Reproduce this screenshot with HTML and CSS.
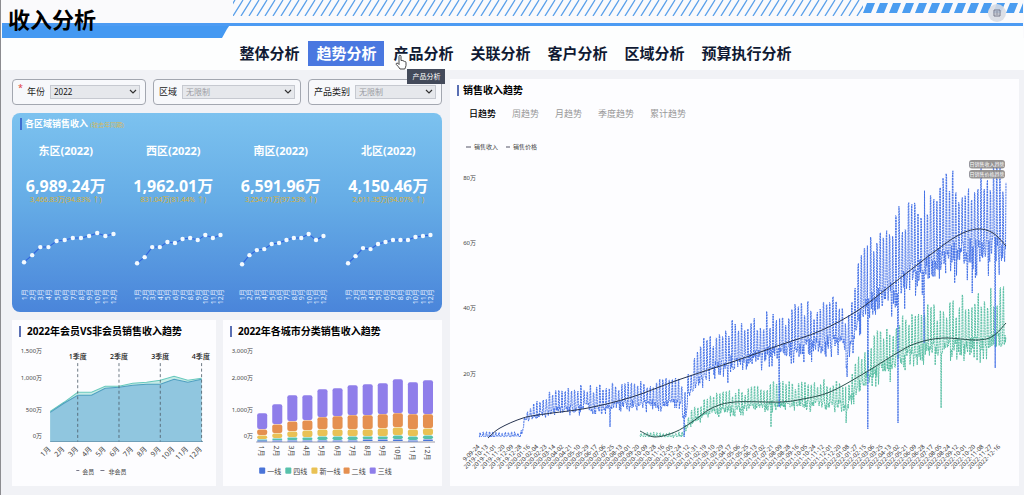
FILE: index.html
```html
<!DOCTYPE html>
<html lang="zh-CN">
<head>
<meta charset="utf-8">
<title>收入分析</title>
<link rel="stylesheet" href="styles.css">
</head>
<body>
<header class="banner">
  <svg class="banner-art" aria-hidden="true">
    <defs>
      <pattern id="thin" x="233" width="8" height="16" patternUnits="userSpaceOnUse">
        <path d="M0 16L10 0M-8 16L2 0M8 16L18 0" stroke="#5aa0ea" stroke-width="1.3"/>
      </pattern>
      <pattern id="thick" x="863" y="3" width="13" height="10" patternUnits="userSpaceOnUse">
        <path d="M0 10L4 0H12L8 10Z" fill="#4a9cf0"/>
      </pattern>
    </defs>
    <rect class="paper" x="0" y="24" width="100%" height="14"/>
    <rect x="233" y="0" width="630" height="16" fill="url(#thin)"/>
    <rect x="863" y="3" width="100%" height="10" fill="url(#thick)"/>
    <path d="M2 24H232Q229 25 227 29L222 38H2Z" fill="#4499f2"/>
    <rect x="2" y="23" width="100%" height="3" fill="#4c9bf3"/>
  </svg>
  <h1>收入分析</h1>
  <button class="float-btn" type="button" aria-label="菜单">
    <svg viewBox="0 0 18 18"><path d="M6 6H12V12H6ZM7.500 8H10.500M7.500 10H10.500" fill="none" stroke="#76798a"/></svg>
  </button>
</header>

<nav class="tabs">
  <a href="#">整体分析</a>
  <a href="#" class="on">趋势分析</a>
  <a href="#" class="hovered">产品分析
    <svg class="hand" viewBox="0 0 12 16"><path d="M4 9V2.500Q4 1.300 5 1.300T6 2.500V6.500Q7.400 5.800 8 7Q9.300 6.500 9.700 7.600Q11 7.300 11 8.700V11.500Q10.700 13 9.800 15H5Q3.500 12.500 1.300 10.500Q.8 9.300 2 9Q3 9 4 10.500Z" fill="#fff" stroke="#333" stroke-width=".9"/></svg>
    <span class="tip">产品分析</span>
  </a>
  <a href="#">关联分析</a>
  <a href="#">客户分析</a>
  <a href="#">区域分析</a>
  <a href="#">预算执行分析</a>
</nav>

<main class="board">
  <div class="left">
    <form class="filters">
      <div class="filter year"><i>*</i><label for="year">年份</label><select id="year"><option>2022</option></select></div>
      <div class="filter region"><label for="region">区域</label><select id="region" class="empty"><option>无限制</option></select></div>
      <div class="filter kind"><label for="kind">产品类别</label><select id="kind" class="empty"><option>无限制</option></select></div>
    </form>

    <section class="regions">
      <h2>各区域销售收入 <small>(较去年同期)</small></h2>
      <div class="kpis" id="kpis"></div>
    </section>

    <div class="pair">
      <section class="panel">
        <h2>2022年会员VS非会员销售收入趋势</h2>
        <svg id="member" viewBox="0 0 203 144" role="img" aria-label="会员销售收入"></svg>
      </section>
      <section class="panel">
        <h2>2022年各城市分类销售收入趋势</h2>
        <svg id="city" viewBox="0 0 218 144" role="img" aria-label="城市分类销售收入"></svg>
      </section>
    </div>
  </div>

  <section class="panel trend">
    <h2>销售收入趋势</h2>
    <div class="periods">
      <button type="button" class="on">日趋势</button>
      <button type="button">周趋势</button>
      <button type="button">月趋势</button>
      <button type="button">季度趋势</button>
      <button type="button">累计趋势</button>
    </div>
    <svg id="daily" viewBox="450 132 569 348" role="img" aria-label="日趋势"></svg>
  </section>
</main>
<script src="charts.js"></script>
</body>
</html>
```
FILE: styles.css
```css
* { box-sizing: border-box; }
body {
  margin: 0;
  background: #f1f2f6;
  color: #111;
  font: 9px/12px "Noto Sans", "Noto Sans CJK SC", sans-serif;
  border-left: 1px solid #8c8c90;
}
h1, h2 { margin: 0; }
button { border: 0; padding: 0; background: none; font: inherit; cursor: pointer; }

.banner { display: grid; height: 38px; background: #fafafc; position: relative; }
.banner > * { grid-area: 1 / 1; }
.banner-art { width: 100%; height: 38px; margin-left: -1px; }
.banner .paper { fill: #fdfefe; }
.banner h1 { padding: 4px 7px; font-size: 22px; line-height: 30px; color: #000; }
.float-btn {
  position: absolute; right: 18px; top: 4px;
  width: 18px; height: 18px; border-radius: 50%;
  background: rgba(215, 219, 227, .88);
}
.float-btn svg { display: block; }

.tabs {
  display: flex; justify-content: center; gap: 1px;
  padding: 3px 0 4px 6px;
  background: #fdfefe;
}
.tabs a {
  position: relative;
  padding: 0 8px;
  font-size: 15px; line-height: 25px; font-weight: 700;
  color: #101a33; text-decoration: none; white-space: nowrap;
}
.tabs .on { background: #4a78e0; color: #fff; }
.hand { position: absolute; left: 10px; top: 13px; width: 12px; height: 16px; z-index: 2; }
.tip {
  position: absolute; left: 22px; top: 28px; z-index: 2;
  padding: 0 5px;
  background: #434a5a; color: #fff;
  font-size: 7px; line-height: 15px; font-weight: 400;
}

.board {
  display: grid; grid-template-columns: 430fr 569fr; gap: 8px;
  padding: 9px 5px 9px 11px;
}
.left { display: flex; flex-direction: column; gap: 8px; min-width: 0; }

.filters { display: grid; grid-template-columns: 134fr 148fr 134fr; gap: 7px; }
.filter {
  display: flex; align-items: center; gap: 5px;
  height: 26px; padding: 0 5px;
  border: 1px solid #a3a7b0; border-radius: 4px;
  background: #f7f8fb;
  position: relative;
}
.filter.year { padding-left: 14px; }
.filter i { position: absolute; left: 5px; top: 2px; color: #e04040; font-style: normal; }
.filter label { white-space: nowrap; color: #222; }
.filter select {
  flex: 1; min-width: 0; height: 14px; padding: 0 3px;
  border: 1px solid #c6c9d0; border-radius: 0;
  appearance: none;
  font: 8px/12px "Noto Sans", "Noto Sans CJK SC", sans-serif; color: #111;
  background: #e6e8ec;
  background-image: url("data:image/svg+xml,%3Csvg xmlns='http://www.w3.org/2000/svg' viewBox='0 0 8 8'%3E%3Cpath d='M1 2L4 5L7 2' fill='none' stroke='%23333' stroke-width='1.2'/%3E%3C/svg%3E");
  background-repeat: no-repeat; background-position: right 2px center; background-size: 8px 8px;
}
.filter select.empty { color: #9a9ca2; }

.regions {
  border-radius: 8px;
  padding: 5px 0 2px;
  background: linear-gradient(#7cc2ef, #65ace6 45%, #4a85da);
  color: #fff;
}
.regions h2 { margin-left: 8px; padding-left: 3px; border-left: 2px solid #3f6fd0; font-size: 9px; line-height: 12px; }
.regions small { color: #d3b95c; font-size: 6px; line-height: 6px; font-weight: 400; }
.kpis { display: grid; grid-template-columns: repeat(4, 1fr); padding-top: 13px; }
.kpi { text-align: center; min-width: 0; }
.kpi h3 { margin: 0; font-size: 11px; line-height: 16px; }
.kpi strong { display: block; margin-top: 17px; font-size: 16px; line-height: 20px; }
.kpi em { display: block; font-style: normal; font-size: 7px; line-height: 8px; color: #dcb230; }
.kpi svg { margin-top: 22px; }

.panel { background: #fdfdff; min-width: 0; }
.panel h2 { margin: 6px 0 0 7px; padding-left: 4px; border-left: 2px solid #5b70b4; font-size: 10px; line-height: 11px; color: #000; white-space: nowrap; }
.pair .panel h2 { padding-left: 6px; }
.pair { display: grid; grid-template-columns: 203fr 218fr; gap: 7px; }
.kpi svg, .panel svg { display: block; width: 100%; height: auto; overflow: hidden; }
.pair .panel svg { margin-top: 4px; }
.periods { display: flex; gap: 16px; padding: 11px 19px; }
.periods button { font-size: 9px; line-height: 14px; color: #999; }
.periods .on { color: #000; font-weight: 500; }

svg text { font-family: "Noto Sans", "Noto Sans CJK SC", sans-serif; }
.t6 { font-size: 6px; fill: #444; }
.t7 { font-size: 7px; fill: #444; }
.date { font-size: 6px; fill: #333; }
.quarter { font-size: 7px; fill: #111; font-weight: 500; }
.white { font-size: 7px; fill: #e6f1ff; }
.end { text-anchor: end; }
.mid { text-anchor: middle; }
.badge { font-size: 5px; fill: #fff; text-anchor: middle; }
```
FILE: charts.js
```js
const months = Array.from({ length: 12 }, (_, i) => (i + 1) + '月');
const byId = id => document.getElementById(id);
const path = pts => 'M' + pts.map(p => p[0].toFixed(1) + ' ' + p[1].toFixed(1)).join('L');
const text = (x, y, cls, s, rot) =>
  `<text x="${x}" y="${y}" class="${cls}"${rot ? ` transform="rotate(${rot} ${x} ${y})"` : ''}>${s}</text>`;

/* Region cards */
const regions = [
  { name: '东区', value: '6,989.24万', diff: '3,466.83万(94.83% ↑)', x0: 12, x1: 101, y: [36, 29, 21, 21, 15, 14, 12, 12, 10, 7, 10, 8] },
  { name: '西区', value: '1,962.01万', diff: '831.04万(81.44% ↑)', x0: 17, x1: 100, y: [37, 31, 21, 21, 16, 17, 13, 12, 14, 9, 12, 9] },
  { name: '南区', value: '6,591.96万', diff: '3,254.71万(97.53% ↑)', x0: 15, x1: 96, y: [38, 29, 24, 23, 18, 17, 14, 12, 12, 8, 14, 10] },
  { name: '北区', value: '4,150.46万', diff: '2,011.35万(94.07% ↑)', x0: 13, x1: 95, y: [37, 30, 22, 23, 18, 16, 14, 14, 14, 11, 10, 9] }
];
byId('kpis').innerHTML = regions.map(r => {
  const pts = r.y.map((y, i) => [r.x0 + (r.x1 - r.x0) * i / 11, y]);
  return `<div class="kpi"><h3>${r.name}(2022)</h3><strong>${r.value}</strong><em>${r.diff}</em>
    <svg viewBox="0 0 107 84"><path d="${path(pts)}" fill="none" stroke="#2f62e0"/>` +
    pts.map(p => `<circle cx="${p[0]}" cy="${p[1]}" r="2.2" fill="#f4faff"/>`).join('') +
    pts.map((p, i) => text(p[0] + 3, 63, 'white end', months[i], -90)).join('') + '</svg></div>';
}).join('');

/* Member / non-member area chart */
(() => {
  const X = i => 38 + i * 13.7;
  const low = [71, 62, 54, 54, 47, 46, 44, 43, 43, 38, 41, 38].map((y, i) => [X(i), y]);
  const top = [70, 61, 51, 51, 45, 45, 42, 41, 39, 35, 39, 37].map((y, i) => [X(i), y]);
  const close = `L${X(11)} 100L${X(0)} 100Z`;
  let s = `<path d="${path(top)}${close}" fill="#c6ebe6"/><path d="${path(low)}${close}" fill="#90c6df"/>
    <path d="${path(top)}" fill="none" stroke="#68c9bd"/><path d="${path(low)}" fill="none" stroke="#4e9fc0"/>
    <path d="M38 100H190" stroke="#6f9fb8"/>`;
  [['1,500万', 12], ['1,000万', 39], ['500万', 71], ['0万', 97]].forEach(a => s += text(30, a[1], 't6 end', a[0]));
  [2, 5, 8, 11].forEach((i, q) => {
    s += `<path d="M${X(i)} 22V100" stroke="#4b5a66" stroke-width=".8" stroke-dasharray="3 2.5"/>`;
    s += text(Math.min(X(i), 188), 18, 'quarter mid', (q + 1) + '季度');
  });
  months.forEach((m, i) => s += text(X(i) + 1, 108, 't7 end', m, -45));
  s += '<path d="M64 129H67M88 129H92" stroke="#778"/>' + text(70, 132, 't6', '会员') + text(96, 132, 't6', '非会员');
  byId('member').innerHTML = s;
})();

/* City tier stacked bars */
(() => {
  const colors = ['#8f7eea', '#e59050', '#e9c154', '#57c1ab', '#4a74d8'];
  const tops = [
    [72, 63, 54, 54, 48, 47, 44, 43, 42, 38, 41, 39],
    [88, 83, 80, 79, 76, 75, 74, 74, 73, 72, 73, 73],
    [94, 92, 90, 89, 88, 88, 88, 88, 87, 86, 88, 87],
    [98, 97, 96, 96, 95, 95, 95, 95, 95, 94, 95, 94],
    [99, 99, 99, 99, 99, 99, 99, 98, 98, 98, 99, 98]
  ];
  let s = '<path d="M33 100.500H211" stroke="#99a"/>';
  [['3,000万', 12], ['2,000万', 39], ['1,000万', 71], ['0万', 97]].forEach(a => s += text(30, a[1], 't6 end', a[0]));
  months.forEach((m, i) => {
    const x = 34 + i * 15;
    tops.forEach((row, k) => {
      const bottom = k < 4 ? tops[k + 1][i] : 100;
      const h = Math.max(bottom - row[i] - .4, 1);
      s += `<rect x="${x}" y="${row[i]}" width="10" height="${h}" rx="${Math.min(2, h / 2)}" fill="${colors[k]}"/>`;
    });
    s += text(x + 2, 104, 't7', m, 90);
  });
  [['一线', 36, 4], ['四线', 62, 3], ['新一线', 88, 2], ['二线', 120, 1], ['三线', 146, 0]].forEach(a => {
    s += `<rect x="${a[1]}" y="126" width="6" height="6" rx="1" fill="${colors[a[2]]}"/>` + text(a[1] + 8, 132, 't7', a[0]);
  });
  byId('city').innerHTML = s;
})();

/* Daily trend */
(() => {
  let seed = 7;
  const rnd = () => (seed = (seed * 16807) % 2147483647) / 2147483647;
  const at = (env, x, k) => {
    let i = 1;
    while (i < env.length - 1 && env[i][0] < x) i++;
    const a = env[i - 1], b = env[i], t = (x - a[0]) / (b[0] - a[0]);
    return a[k] + (b[k] - a[k]) * t;
  };
  const series = (env, dips) => {
    const pts = [], end = env[env.length - 1][0];
    let day = 0, peak = 1;
    for (let x = env[0][0]; x <= end; x += .45, day++) {
      const lo = at(env, x, 1), hi = at(env, x, 2), d = lo - hi;
      if (day % 7 === 0) peak = .7 + rnd() * .38;
      const w = day % 7;
      const v = w === 2 || w === 3 ? peak - rnd() * .08 : rnd() * .3 - (rnd() < .15 ? .18 : 0);
      pts.push([x, Math.max(lo - d * v, 162)]);
    }
    dips.forEach(q => { const i = Math.round((q[0] - env[0][0]) / .45); if (pts[i]) pts[i][1] = q[1]; });
    return pts;
  };
  const smooth = p => {
    let d = `M${p[0]}`;
    for (let i = 0; i < p.length - 1; i++) {
      const a = p[i - 1] || p[i], b = p[i], c = p[i + 1], e = p[i + 2] || c;
      d += `C${b[0] + (c[0] - a[0]) / 6} ${b[1] + (c[1] - a[1]) / 6} ${c[0] - (e[0] - b[0]) / 6} ${c[1] - (e[1] - b[1]) / 6} ${c[0]} ${c[1]}`;
    }
    return d;
  };
  const blue = [[479, 437, 432], [521, 437, 432], [525, 422, 412], [535, 418, 402], [552, 414, 391], [570, 412, 387], [600, 410, 383],
    [630, 408, 382], [650, 408, 380], [682, 408, 378], [684, 432, 395], [688, 402, 372], [695, 390, 358], [704, 379, 338], [715, 372, 334], [730, 370, 322],
    [750, 366, 318], [775, 358, 312], [800, 355, 306], [830, 350, 297], [844, 349, 293], [846, 374, 310], [850, 356, 295], [857, 328, 268], [868, 316, 241], [880, 308, 228],
    [898, 298, 212], [910, 290, 202], [930, 280, 186], [955, 270, 176], [980, 263, 170], [1006, 265, 160]];
  const green = [[640, 437, 432], [683, 437, 432], [688, 427, 415], [695, 422, 405], [710, 415, 397], [725, 414, 389], [740, 412, 390], [770, 408, 382],
    [800, 407, 382], [840, 408, 380], [846, 412, 385], [855, 396, 362], [865, 386, 340], [880, 376, 328], [895, 368, 325], [910, 363, 312], [931, 356, 302],
    [950, 355, 304], [967, 356, 294], [985, 351, 292], [1006, 347, 286]];
  const draw = (pts, c) => `<path d="${path(pts)}" fill="none" stroke="${c}" stroke-width=".95" stroke-dasharray="2 .7" stroke-linejoin="round"/>`;
  let s = '';
  s += draw(series(green, [[771, 427], [846, 423], [941, 408], [890, 382]]), '#52bda0');
  s += draw(series(blue, [[610, 427], [684, 437], [728, 383], [779, 407], [847, 377], [868, 429], [898, 423], [924, 343], [972, 293], [995, 368]]), '#3f6ee6');
  s += `<path d="${smooth([[488, 438], [500, 428], [523, 418], [545, 414], [588, 408], [632, 397], [678, 380], [735, 361], [780, 345], [820, 331], [857, 311], [890, 286], [930, 255], [957, 236], [977, 229], [993, 233], [1006, 246]])}" fill="none" stroke="#263350"/>`;
  s += `<path d="${smooth([[640, 431], [655, 437], [675, 432], [692, 422], [712, 408], [735, 402], [780, 402], [803, 399], [830, 392], [863, 374], [897, 353], [917, 343], [943, 338], [977, 340], [993, 336], [1006, 323]])}" fill="none" stroke="#28504c"/>`;
  [['80万', 180], ['60万', 245], ['40万', 310], ['20万', 376]].forEach(a => s += text(476, a[1], 't6 end', a[0]));
  const date = new Date(Date.UTC(2019, 8, 24));
  for (let i = 0; i < 63; i++) {
    const label = date.toISOString().slice(0, 10);
    s += text(480 + i * 8.4, 447, 'date end', i ? label : label.slice(3), -45);
    date.setUTCDate(date.getUTCDate() + (label === '2020-02-23' ? 20 : 19));
  }
  s += '<path d="M466 147H471M506 147H510" stroke="#556"/>' + text(474, 149, 't6', '销售收入') + text(513, 149, 't6', '销售价格');
  [['日销售收入趋势', 160], ['日销售价格趋势', 170]].forEach(a => {
    s += `<rect x="969" y="${a[1]}" width="36" height="8.500" rx="3" fill="#8b8786" opacity=".9"/>` + text(987, a[1] + 6, 'badge', a[0]);
  });
  byId('daily').innerHTML = s;
})();
```
